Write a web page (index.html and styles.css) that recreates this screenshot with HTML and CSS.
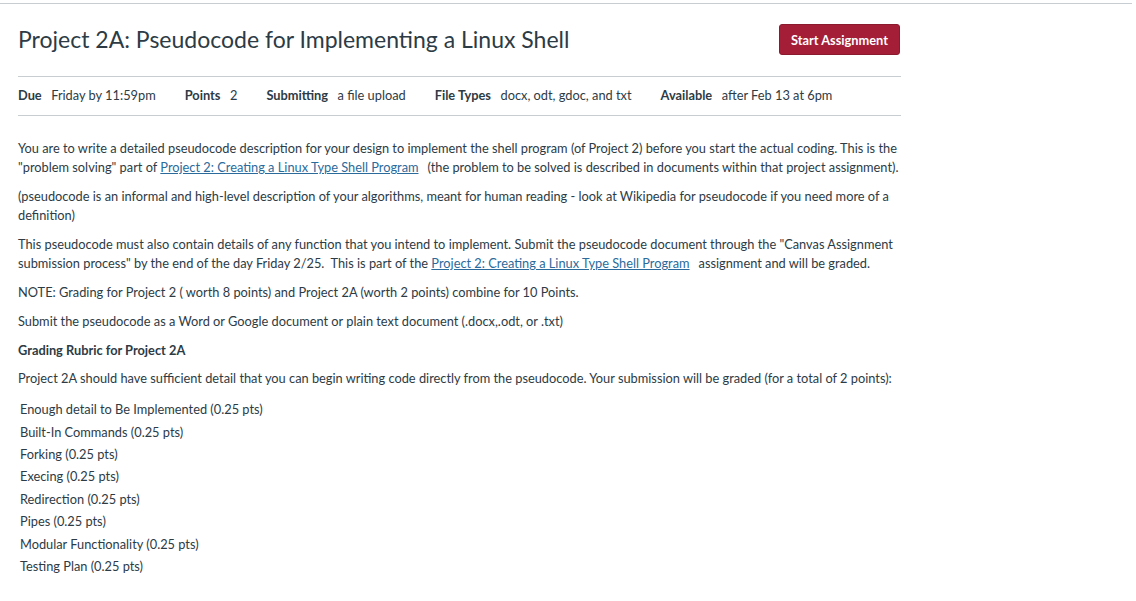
FILE: index.html
```html
<!DOCTYPE html>
<html lang="en">
<head>
<meta charset="utf-8">
<title>Project 2A</title>
<link rel="stylesheet" href="styles.css">
</head>
<body>
<div class="topbar"></div>
<main class="content">
  <div class="header">
    <h1 class="title">Project 2A: Pseudocode for Implementing a Linux Shell</h1>
    <button class="start-btn" type="button">Start Assignment</button>
  </div>
  <ul class="details">
    <li><span class="label">Due</span><span class="value">Friday by 11:59pm</span></li>
    <li><span class="label">Points</span><span class="value">2</span></li>
    <li><span class="label">Submitting</span><span class="value">a file upload</span></li>
    <li><span class="label">File Types</span><span class="value">docx, odt, gdoc, and txt</span></li>
    <li><span class="label">Available</span><span class="value">after Feb 13 at 6pm</span></li>
  </ul>
  <div class="description">
    <p>You are to write a detailed pseudocode description for your design to implement the shell program (of Project 2) before you start the actual coding. This is the "problem solving" part of <a href="#">Project 2: Creating a Linux Type Shell Program</a><span class="sp"></span>(the problem to be solved is described in documents within that project assignment).</p>
    <p>(pseudocode is an informal and high-level description of your algorithms, meant for human reading - look at Wikipedia for pseudocode if you need more of a definition)</p>
    <p>This pseudocode must also contain details of any function that you intend to implement. Submit the pseudocode document through the "Canvas Assignment submission process" by the end of the day Friday 2/25.&nbsp; This is part of the <a href="#">Project 2: Creating a Linux Type Shell Program</a><span class="sp"></span>assignment and will be graded.</p>
    <p>NOTE: Grading for Project 2 ( worth 8 points) and Project 2A (worth 2 points) combine for 10 Points.</p>
    <p>Submit the pseudocode as a Word or Google document or plain text document (.docx,.odt, or .txt)</p>
    <p><strong>Grading Rubric for Project 2A</strong></p>
    <p>Project 2A should have sufficient detail that you can begin writing code directly from the pseudocode. Your submission will be graded (for a total of 2 points):</p>
    <ul class="rubric">
      <li>Enough detail to Be Implemented (0.25 pts)</li>
      <li>Built-In Commands (0.25 pts)</li>
      <li>Forking (0.25 pts)</li>
      <li>Execing (0.25 pts)</li>
      <li>Redirection (0.25 pts)</li>
      <li>Pipes (0.25 pts)</li>
      <li>Modular Functionality (0.25 pts)</li>
      <li>Testing Plan (0.25 pts)</li>
    </ul>
  </div>
</main>
</body>
</html>
```
FILE: styles.css
```css
html, body {
  margin: 0;
  padding: 0;
  background: #ffffff;
}
body {
  font-family: Lato, "Liberation Sans", sans-serif;
  color: #2d3b45;
  font-size: 12.8px;
}
.topbar {
  margin-top: 3px;
  width: 1132px;
  border-top: 1px solid #c7cdd1;
}
.content {
  width: 883px;
  margin-left: 18px;
}
.header {
  display: flex;
  align-items: center;
  justify-content: space-between;
  height: 72px;
  border-bottom: 1px solid #c7cdd1;
}
.title {
  margin: 0;
  font-weight: 400;
  font-size: 23px;
  line-height: 30px;
  color: #2d3b45;
  padding-bottom: 3px;
}
.start-btn {
  font-family: Lato, "Liberation Sans", sans-serif;
  background: #a51e37;
  color: #ffffff;
  border: 1px solid #8c1a2f;
  border-radius: 3px;
  font-size: 12.8px;
  font-weight: 700;
  height: 31px;
  width: 121px;
  padding: 0;
  margin-bottom: 1px;
  margin-right: 1px;
}
.details {
  list-style: none;
  margin: 0;
  padding: 0 0 2px;
  height: 36px;
  display: flex;
  align-items: center;
  gap: 29px;
  border-bottom: 1px solid #c7cdd1;
}
.details li {
  display: flex;
  gap: 9.5px;
  white-space: nowrap;
}
.label {
  font-weight: 700;
}
.description {
  padding-top: 23px;
}
.description p {
  margin: 0 0 9.6px;
  line-height: 19.2px;
}
.description a {
  color: #2b6b9c;
  text-decoration: underline;
}
.sp {
  display: inline-block;
  width: 9px;
}
.rubric {
  list-style: none;
  margin: 0;
  padding: 0 0 0 2px;
}
.rubric li {
  line-height: 22.4px;
}
```
